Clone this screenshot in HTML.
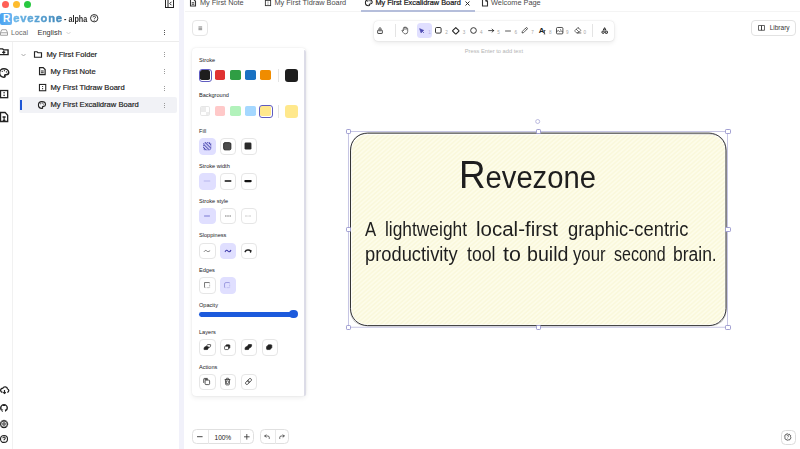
<!DOCTYPE html>
<html lang="en">
<head>
<meta charset="utf-8">
<title>Revezone</title>
<style>
html,body{margin:0;padding:0;}
body{width:800px;height:449px;overflow:hidden;background:#fff;position:relative;font-family:"Liberation Sans",sans-serif;color:#1b1b1f;}
.abs{position:absolute;}
svg{position:absolute;overflow:visible;}
.t{position:absolute;white-space:nowrap;line-height:1;}
/* sidebar */
#sidebar{position:absolute;left:0;top:0;width:181px;height:449px;background:#fff;}
#divider{position:absolute;left:179.3px;top:0;width:4.4px;height:449px;background:#f1f1fa;}
.dot{position:absolute;width:7px;height:7px;border-radius:50%;top:1px;}
.tree{font-size:7.6px;color:#1a1a1a;-webkit-text-stroke:0.18px #1a1a1a;}
.kebab{position:absolute;left:164px;width:1px;}
.kebab i{position:absolute;left:0;width:1px;height:1px;background:#555;}
.k2 i{background:#9a9a9a;}
/* tabs */
.tab{font-size:7.35px;color:#4a4a4a;top:-0.8px;}
/* panel */
#panel{position:absolute;left:192px;top:48px;width:113px;height:347px;background:#fff;border-radius:4px;box-shadow:0 0 1.5px rgba(0,0,0,.10),0 1.5px 5px rgba(0,0,0,.07);}
.lbl{position:absolute;left:7px;font-size:5.6px;color:#1b1b1f;white-space:nowrap;line-height:1;}
.sw{position:absolute;width:10.4px;height:10.4px;border-radius:1.8px;}
.btn{position:absolute;width:14.5px;height:14.7px;border:0.7px solid #e6e6e6;border-radius:4px;background:#fff;box-sizing:content-box;}
.btn.on{background:#e0dfff;border-color:#e0dfff;}
.island{position:absolute;background:#fff;border-radius:4px;box-shadow:0 0 1.5px rgba(0,0,0,.18),0 2px 5px rgba(0,0,0,.08);}
.num{position:absolute;font-size:4.6px;color:#a6a6a6;line-height:1;top:30.6px;}
.hand{font-family:"Liberation Sans",sans-serif;color:#1e1e1e;position:absolute;white-space:nowrap;line-height:1;transform-origin:0 0;}
#h1::first-letter{font-size:39px;}
.line{left:0;}
.line span{position:absolute;top:0;transform-origin:0 0;display:block;white-space:nowrap;}
.hd{position:absolute;width:3.4px;height:3.4px;border:0.7px solid #a19fd2;background:#fff;border-radius:1.2px;}
</style>
</head>
<body>

<!-- ============ SIDEBAR ============ -->
<div id="sidebar">
  <div class="dot" style="left:2px;background:#ff5f57;"></div>
  <div class="dot" style="left:13px;background:#febc2e;"></div>
  <div class="dot" style="left:24.200px;background:#28c840;"></div>

  <!-- logo -->
  <div class="abs" style="left:0;top:12.5px;width:12px;height:12px;border-radius:2px;background:linear-gradient(90deg,#4aa3f0,#69b4f2);"></div>
  <div class="t" style="left:3px;top:13.5px;font-size:10px;font-weight:bold;color:#fff;">R</div>
  <div class="t" id="logotxt" style="left:13.300px;top:13px;font-size:11.200px;font-weight:bold;letter-spacing:0.750px;background:linear-gradient(90deg,#6ab7ea,#3f86b8);-webkit-background-clip:text;background-clip:text;color:transparent;-webkit-text-fill-color:transparent;-webkit-text-stroke:0.45px transparent;">evezone</div>
  <div class="t" style="left:64.300px;top:14.600px;font-size:8.600px;font-weight:bold;color:#2a2a2a;transform:scaleX(.84);transform-origin:0 0;">- alpha</div>
  <svg style="left:89.900px;top:14.300px;" width="8.400" height="8.400" viewBox="0 0 16 16"><circle cx="8" cy="8" r="7" fill="none" stroke="#222" stroke-width="1.8"/><path d="M5.8 6.3a2.3 2.3 0 1 1 3.2 2.1c-.7.3-1 .7-1 1.4" fill="none" stroke="#222" stroke-width="1.6"/><circle cx="8" cy="12" r="1" fill="#222"/></svg>

  <!-- collapse icon -->
  <svg style="left:165px;top:-1px;" width="9" height="9" viewBox="0 0 18 18"><rect x="1" y="1" width="16" height="16" fill="none" stroke="#222" stroke-width="2"/><line x1="6" y1="1" x2="6" y2="17" stroke="#222" stroke-width="2"/><path d="M13 5.5l-3.5 3.5l3.5 3.5" fill="none" stroke="#222" stroke-width="2"/></svg>

  <!-- local / english row -->
  <svg style="left:0;top:29px;" width="8" height="7" viewBox="0 0 16 14"><path d="M1 7l2.5-5.5h9L15 7v5.5H1z" fill="none" stroke="#8a8a8a" stroke-width="1.6"/><line x1="1" y1="7.5" x2="15" y2="7.5" stroke="#8a8a8a" stroke-width="1.6"/></svg>
  <div class="t" style="left:11px;top:29.900px;font-size:7.100px;color:#6a6a6a;">Local</div>
  <div class="t" style="left:37.5px;top:28.5px;font-size:7.4px;color:#333;">English</div>
  <svg style="left:65.5px;top:30.5px;" width="5" height="4" viewBox="0 0 10 8"><path d="M1 2l4 4l4-4" fill="none" stroke="#c4c4c4" stroke-width="1.4"/></svg>
  <div class="kebab" style="top:30px;"><i style="top:0"></i><i style="top:2px"></i><i style="top:4px"></i></div>

  <div class="abs" style="left:0;top:41px;width:181px;height:1px;background:#ececec;"></div>
  <div class="abs" style="left:12px;top:42px;width:1px;height:407px;background:#f1f1f1;"></div>

  <!-- left icon column -->
  <svg style="left:0;top:48.200px;" width="8.600" height="7.600" viewBox="0 0 16 16" preserveAspectRatio="none"><path d="M0 2h5l2 2h8v10H0" fill="none" stroke="#222" stroke-width="2.56"/><path d="M4 9h6M7 6v6" stroke="#222" stroke-width="2.56"/></svg>
  <svg style="left:-1.200px;top:67.800px;" width="10.800" height="10" viewBox="0 0 20 18" preserveAspectRatio="none"><path d="M9 1.5c5 0 9 3 9 6.5c0 2.5-2 4-4.500 4h-1.500c-1.200 0-1.800 1.200-1.100 2.200c.8 1.200 0 2.300-1.900 2.300c-4.600 0-8-3.200-8-7.500S4.500 1.500 9 1.500z" fill="none" stroke="#222" stroke-width="2.82"/><circle cx="6" cy="6" r="1.2" fill="#222"/><circle cx="10" cy="4.800" r="1.200" fill="#222"/><circle cx="13.800" cy="7" r="1.200" fill="#222"/></svg>
  <svg style="left:0;top:90.400px;" width="8.200" height="8.200" viewBox="0 0 16 16"><rect x="1" y="1" width="14" height="14" fill="none" stroke="#222" stroke-width="2.56"/><circle cx="8" cy="5.500" r="1.500" fill="#222"/><circle cx="8" cy="10.500" r="1.500" fill="#222"/></svg>
  <svg style="left:0;top:112.400px;" width="8.200" height="10" viewBox="0 0 16 18" preserveAspectRatio="none"><path d="M1 1h9l5 5v11H1z" fill="none" stroke="#222" stroke-width="2.56"/><path d="M5 9h6M8 9v6M5.500 15h5" stroke="#222" stroke-width="2.3" fill="none"/></svg>

  <!-- tree -->
  <svg style="left:21px;top:52.5px;" width="5" height="4" viewBox="0 0 10 8"><path d="M1 2l4 4l4-4" fill="none" stroke="#9a9a9a" stroke-width="1.66"/></svg>
  <svg style="left:34px;top:50.600px;" width="8" height="7" viewBox="0 0 16 14"><path d="M1 1.500h5l2 2h7v9H1z" fill="none" stroke="#222" stroke-width="2.3"/></svg>
  <div class="t tree" style="left:46.5px;top:50.500px;">My First Folder</div>
  <div class="kebab k2" style="top:52px;"><i style="top:0"></i><i style="top:2px"></i><i style="top:4px"></i></div>

  <svg style="left:38.800px;top:67px;" width="6.700" height="8.200" viewBox="0 0 12 15" preserveAspectRatio="none"><path d="M1 1h6.500l3.500 3.500v9.500H1z" fill="none" stroke="#222" stroke-width="2.18"/><path d="M3.500 7.500h5M3.500 10.500h5" stroke="#222" stroke-width="1.92"/></svg>
  <div class="t tree" style="left:50.500px;top:67.500px;">My First Note</div>
  <div class="kebab k2" style="top:69px;"><i style="top:0"></i><i style="top:2px"></i><i style="top:4px"></i></div>

  <svg style="left:38.800px;top:84px;" width="7.200" height="7.200" viewBox="0 0 13 13"><rect x=".8" y=".8" width="11.400" height="11.400" fill="none" stroke="#222" stroke-width="1.92"/><circle cx="6.500" cy="4.500" r="1.100" fill="#222"/><circle cx="6.500" cy="8.500" r="1.100" fill="#222"/></svg>
  <div class="t tree" style="left:50.500px;top:84px;">My First Tldraw Board</div>
  <div class="kebab k2" style="top:85.500px;"><i style="top:0"></i><i style="top:2px"></i><i style="top:4px"></i></div>

  <div class="abs" style="left:19px;top:97px;width:158px;height:15.500px;background:#f1f2f6;border-radius:2px;"></div>
  <div class="abs" style="left:19.500px;top:100px;width:2px;height:9.500px;background:#1f57d6;"></div>
  <svg style="left:38px;top:101px;" width="8.400" height="8" viewBox="0 0 20 18" preserveAspectRatio="none"><path d="M9 1.500c5 0 9 3 9 6.500c0 2.500-2 4-4.500 4h-1.500c-1.200 0-1.800 1.200-1.100 2.200c.8 1.200 0 2.300-1.900 2.300c-4.600 0-8-3.200-8-7.500S4.500 1.500 9 1.500z" fill="none" stroke="#222" stroke-width="2.56"/><circle cx="6" cy="6" r="1.200" fill="#222"/><circle cx="10" cy="4.800" r="1.200" fill="#222"/><circle cx="13.800" cy="7" r="1.200" fill="#222"/></svg>
  <div class="t tree" style="left:50.500px;top:101px;">My First Excalidraw Board</div>
  <div class="kebab k2" style="top:102.500px;"><i style="top:0"></i><i style="top:2px"></i><i style="top:4px"></i></div>

  <!-- bottom icons -->
  <svg style="left:0;top:386px;" width="9" height="8" viewBox="0 0 18 16"><path d="M5 12.500a4 4 0 0 1 .5-8a5 5 0 0 1 9.500 1.500a3.300 3.300 0 0 1-.5 6.500" fill="none" stroke="#222" stroke-width="2.56"/><path d="M9 8v7M6.500 12.500l2.500 2.500l2.500-2.500" fill="none" stroke="#222" stroke-width="2.3"/></svg>
  <svg style="left:0;top:403.500px;" width="8" height="8" viewBox="0 0 16 16"><path fill="#222" d="M8 0C3.580 0 0 3.580 0 8c0 3.540 2.290 6.530 5.470 7.590.4.070.55-.17.550-.38 0-.19-.01-.82-.01-1.490-2.010.37-2.530-.49-2.690-.94-.09-.23-.48-.94-.82-1.130-.28-.15-.68-.52-.01-.53.630-.01 1.080.58 1.230.82.720 1.210 1.870.87 2.330.66.070-.52.280-.87.510-1.070-1.780-.2-3.640-.89-3.640-3.950 0-.87.310-1.590.82-2.150-.08-.2-.36-1.020.08-2.120 0 0 .67-.21 2.200.82.640-.18 1.320-.27 2-.27s1.360.09 2 .27c1.530-1.040 2.200-.82 2.200-.82.440 1.100.16 1.920.08 2.120.51.560.82 1.270.82 2.150 0 3.070-1.870 3.750-3.650 3.950.29.250.54.730.54 1.480 0 1.070-.01 1.930-.01 2.200 0 .21.150.46.550.38A8.010 8.010 0 0 0 16 8c0-4.420-3.580-8-8-8z"/></svg>
  <svg style="left:0;top:419.500px;" width="8" height="8" viewBox="0 0 16 16"><path d="M8 1l1.500 1.600l2.200-.4l.6 2.100l2.100.6l-.4 2.200L15.500 8.600l-1.500 1.600l.4 2.200l-2.100.6l-.6 2.100l-2.200-.4L8 16l-1.500-1.300l-2.200.4l-.6-2.100l-2.100-.6l.4-2.200L.5 8.600L2 7.100l-.4-2.200l2.100-.6l.6-2.100l2.200.4z" transform="translate(0,-.5)" fill="none" stroke="#222" stroke-width="2.18"/><circle cx="8" cy="8" r="2.400" fill="none" stroke="#222" stroke-width="2.05"/></svg>
  <svg style="left:0;top:434.500px;" width="8" height="8" viewBox="0 0 16 16"><circle cx="8" cy="8" r="7" fill="none" stroke="#222" stroke-width="2.3"/><path d="M5.800 6.300a2.300 2.300 0 1 1 3.200 2.100c-.7.300-1 .7-1 1.400" fill="none" stroke="#222" stroke-width="2.05"/><circle cx="8" cy="12" r="1" fill="#222"/></svg>
</div>
<div id="divider"></div>

<!-- ============ TABS ============ -->
<div id="tabs">
  <div class="abs" style="left:185px;top:10.500px;width:615px;height:1px;background:#f4f4f4;"></div>
  <svg style="left:190px;top:-1px;" width="6" height="7.500" viewBox="0 0 12 15"><path d="M1 1h6.500l3.500 3.500v9.500H1z" fill="none" stroke="#333" stroke-width="2.18"/><path d="M3.500 7.500h5M3.500 10.500h5" stroke="#333" stroke-width="1.92"/></svg>
  <div class="t tab" style="left:200px;">My First Note</div>
  <svg style="left:265px;top:0px;" width="6" height="6" viewBox="0 0 13 13"><rect x=".8" y=".8" width="11.400" height="11.400" fill="none" stroke="#333" stroke-width="1.92"/><circle cx="6.500" cy="4.500" r="1.100" fill="#333"/><circle cx="6.500" cy="8.500" r="1.100" fill="#333"/></svg>
  <div class="t tab" style="left:274.500px;">My First Tldraw Board</div>
  <svg style="left:365px;top:-1px;" width="8" height="7.500" viewBox="0 0 20 18"><path d="M9 1.500c5 0 9 3 9 6.500c0 2.500-2 4-4.500 4h-1.500c-1.200 0-1.800 1.200-1.100 2.200c.8 1.200 0 2.300-1.900 2.300c-4.600 0-8-3.200-8-7.500S4.500 1.500 9 1.500z" fill="none" stroke="#222" stroke-width="2.56"/><circle cx="6" cy="6" r="1.200" fill="#222"/><circle cx="10" cy="4.800" r="1.200" fill="#222"/><circle cx="13.800" cy="7" r="1.200" fill="#222"/></svg>
  <div class="t tab" style="left:375.500px;color:#111;-webkit-text-stroke:0.2px #111;">My First Excalidraw Board</div>
  <svg style="left:464.500px;top:.5px;" width="5" height="5" viewBox="0 0 10 10"><path d="M1 1l8 8M9 1l-8 8" stroke="#222" stroke-width="1.92"/></svg>
  <div class="abs" style="left:361px;top:9.500px;width:113.500px;height:2px;background:#b5bedb;"></div>
  <svg style="left:482px;top:-1px;" width="6" height="7.500" viewBox="0 0 12 15"><path d="M1 1h6.500l3.500 3.500v9.500H1z" fill="none" stroke="#333" stroke-width="2.18"/><path d="M7.500 1v3.500h3.500" stroke="#333" stroke-width="1.66" fill="none"/></svg>
  <div class="t tab" style="left:491px;">Welcome Page</div>
</div>

<!-- ============ CANVAS ============ -->
<div id="canvas">
  <svg style="left:0;top:0;" width="800" height="449" viewBox="0 0 800 449">
    <defs>
      <pattern id="hach" width="3.2" height="3.2" patternUnits="userSpaceOnUse" patternTransform="rotate(-41)">
        <rect width="3.2" height="3.2" fill="#fdfce9"/>
        <line x1="0" y1="1.6" x2="3.2" y2="1.6" stroke="#faf7d6" stroke-width="1.1"/>
      </pattern>
      <clipPath id="rc"><rect x="350.5" y="133.500" width="375.500" height="192" rx="17" ry="17"/></clipPath>
    </defs>
    <rect x="351.800" y="134.700" width="373" height="189.700" rx="15.500" ry="15.500" fill="url(#hach)"/>
    <rect x="350.500" y="133.100" width="375.500" height="192.500" rx="17" ry="17" fill="none" stroke="#333" stroke-width="0.950"/>
    <path d="M368 133.200 Q540 132.700 710 134 Q726.400 134.600 726.200 151 L726.500 308 Q726.200 326 709 325.700 L367 325.900 Q350.200 325.400 350.300 309 L350.700 150 Q350.900 133.500 368 133.200Z" fill="none" stroke="#1e1e1e" stroke-width="0.600" opacity=".4"/>
    <!-- selection -->
    <rect x="348.400" y="131.400" width="379.200" height="195.800" fill="none" stroke="#a19fd2" stroke-width="0.800" opacity=".75"/>
    <line x1="537.700" y1="124" x2="537.700" y2="131" stroke="#7d79d8" stroke-width="0" />
    <circle cx="537.700" cy="121.500" r="2" fill="#fff" stroke="#a19fd2" stroke-width="0.700"/>
  </svg>
  <div class="hd" style="left:345.8px;top:128.8px;"></div>
  <div class="hd" style="left:535.6px;top:128.8px;"></div>
  <div class="hd" style="left:725.2px;top:128.8px;"></div>
  <div class="hd" style="left:345.8px;top:226.9px;"></div>
  <div class="hd" style="left:725.2px;top:226.9px;"></div>
  <div class="hd" style="left:345.8px;top:324.9px;"></div>
  <div class="hd" style="left:535.6px;top:324.9px;"></div>
  <div class="hd" style="left:725.2px;top:324.9px;"></div>
  <div class="hand" id="h1" style="left:459.200px;top:154.500px;font-size:31px;transform:scaleX(.942);">Revezone</div>
  <div class="hand line" id="h2" style="top:219.500px;font-size:19.500px;"><span style="left:365.0px;transform:scaleX(0.857);">A</span> <span style="left:384.6px;transform:scaleX(0.890);">lightweight</span> <span style="left:476.4px;transform:scaleX(1.051);">local-first</span> <span style="left:567.5px;transform:scaleX(0.941);">graphic-centric</span></div>
  <div class="hand line" id="h3" style="top:245.300px;font-size:19.500px;"><span style="left:365.0px;transform:scaleX(0.939);">productivity</span> <span style="left:467.0px;transform:scaleX(0.903);">tool</span> <span style="left:503.4px;transform:scaleX(1.100);">to</span> <span style="left:527.0px;transform:scaleX(1.007);">build</span> <span style="left:573.1px;transform:scaleX(0.857);">your</span> <span style="left:613.6px;transform:scaleX(0.821);">second</span> <span style="left:673.3px;transform:scaleX(0.896);">brain.</span></div>
</div>

<!-- ============ EXCALIDRAW UI ============ -->
<div id="ui">
  <div class="abs" style="left:192.300px;top:20.100px;width:13.700px;height:13.700px;border:0.700px solid #e6e6e6;border-radius:4px;background:#fff;"></div>
  <svg style="left:197.600px;top:25.500px;" width="4.600" height="4.600" viewBox="0 0 10 10"><path d="M1 2h8M1 5h8M1 8h8" stroke="#444" stroke-width="1.300"/></svg>
  <div class="island" id="toolbar" style="left:373.500px;top:20.500px;width:240px;height:20px;"></div>
  <svg style="left:376.900px;top:27px;" width="6" height="7" viewBox="0 0 13 15"><rect x="1.500" y="6.800" width="10" height="7.200" rx="1" fill="none" stroke="#222" stroke-width="1.800"/><path d="M4.500 6.800V3.400a2 2 0 0 1 4 0V6.800" fill="none" stroke="#222" stroke-width="1.600"/><circle cx="6.500" cy="10.300" r="1" fill="#222"/></svg>
  <div class="abs" style="left:395.200px;top:24px;width:0.700px;height:12.500px;background:#e4e4e4;"></div>
  <svg style="left:400.600px;top:26.200px;" width="8" height="8.500" viewBox="0 0 16 17"><path d="M4.800 10V4.200Q4.800 3 5.900 3Q7 3 7 4.200V2.800Q7 1.600 8.100 1.600Q9.200 1.600 9.200 2.800V3.600Q9.200 2.600 10.300 2.600Q11.400 2.600 11.400 3.800V5.400Q11.400 4.400 12.400 4.400Q13.400 4.400 13.400 5.600V11Q13.400 15.800 8.800 15.800Q6 15.800 4.600 13.400L2 9.600Q1.400 8.400 2.600 8.200Q3.600 8.200 4.800 10Z" fill="none" stroke="#333" stroke-width="1.400" stroke-linejoin="round"/><path d="M7 4.200V8M9.200 3.600V8M11.400 5.400V8.400" stroke="#555" stroke-width=".9" fill="none"/></svg>
  <div class="abs" style="left:417.100px;top:23.400px;width:15px;height:14.300px;border-radius:3.500px;background:#e0dfff;"></div>
  <svg style="left:419.400px;top:28px;" width="5.600" height="5.600" viewBox="0 0 13 13"><path d="M1.500 1.500l3.600 10l1.700-4.200l4.200-1.700z" fill="#4a47b1" stroke="#4a47b1" stroke-width="1.600" stroke-linejoin="round"/><path d="M7 7l4 4" stroke="#4a47b1" stroke-width="1.800" stroke-linecap="round"/></svg>
  <div class="num" style="left:428.3px;color:#b3b0ea;">1</div>
  <div class="num" style="left:445.2px;">2</div>
  <div class="num" style="left:462.7px;">3</div>
  <div class="num" style="left:480px;">4</div>
  <div class="num" style="left:497.2px;">5</div>
  <div class="num" style="left:514.5px;">6</div>
  <div class="num" style="left:531.2px;">7</div>
  <div class="num" style="left:548.9px;">8</div>
  <div class="num" style="left:566px;">9</div>
  <div class="num" style="left:583.5px;">0</div>
  <svg style="left:435.300px;top:27.200px;" width="6.600" height="6.600" viewBox="0 0 13 13"><rect x="1" y="1" width="11" height="11" rx="2.200" fill="none" stroke="#222" stroke-width="1.800"/></svg>
  <svg style="left:452.300px;top:26.600px;" width="7.600" height="7.600" viewBox="0 0 15 15"><path d="M7.500 1.200l5.800 5.300q1 1 0 2l-5.100 5q-.7.600-1.400 0l-5.100-5q-1-1 0-2z" fill="none" stroke="#222" stroke-width="2.200" stroke-linejoin="round"/></svg>
  <svg style="left:469.700px;top:26.900px;" width="7" height="7" viewBox="0 0 14 14"><circle cx="7" cy="7" r="5.700" fill="none" stroke="#222" stroke-width="1.800"/></svg>
  <svg style="left:487.700px;top:27.800px;" width="6.400" height="5.200" viewBox="0 0 15 12"><path d="M1.500 6h12M9.500 2.500l4 3.500l-4 3.500" fill="none" stroke="#111" stroke-width="1.700" stroke-linecap="round" stroke-linejoin="round"/></svg>
  <svg style="left:504.800px;top:29.500px;" width="6" height="2" viewBox="0 0 12 4"><path d="M1 2h10" stroke="#222" stroke-width="1.500" stroke-linecap="round"/></svg>
  <svg style="left:521.200px;top:27px;" width="7" height="7" viewBox="0 0 14 14"><path d="M2 12l.8-3.300l7-7a1.600 1.600 0 0 1 2.500 2.500l-7 7zM8.800 2.700l2.500 2.500" fill="none" stroke="#222" stroke-width="1.400" stroke-linejoin="round"/></svg>
  <div class="t" style="left:538.800px;top:26.800px;font-size:7.800px;font-weight:bold;color:#222;">A</div>
  <svg style="left:543px;top:30px;" width="3" height="4.500" viewBox="0 0 6 9"><path d="M1 1h4M3 1v7M1.500 8h3" stroke="#222" stroke-width="1.300" fill="none"/></svg>
  <svg style="left:555.800px;top:26.800px;" width="7.400" height="7.400" viewBox="0 0 15 15"><rect x="1" y="1" width="13" height="13" rx="2" fill="none" stroke="#222" stroke-width="1.600"/><path d="M1 10l3.500-3l3 2.500l2.500-2l4 3" fill="none" stroke="#222" stroke-width="1.400"/><circle cx="9.500" cy="5" r=".9" fill="#222"/></svg>
  <svg style="left:573.600px;top:27.200px;" width="7.400" height="6.900" viewBox="0 0 16 15"><path d="M9.500 1.800l4.700 4.700q.8.800 0 1.600L9.500 12.800H5.500L2 9.300q-.8-.8 0-1.600l5.900-5.900q.8-.8 1.600 0zM5 5l5.500 5.500M7 13h8" fill="none" stroke="#222" stroke-width="1.400" stroke-linejoin="round" stroke-linecap="round"/></svg>
  <div class="abs" style="left:592.400px;top:24px;width:0.700px;height:12.500px;background:#e4e4e4;"></div>
  <svg style="left:600.600px;top:26.900px;" width="7.200" height="7.200" viewBox="0 0 16 16"><path d="M8 1.500l2.800 5H5.200z" fill="none" stroke="#111" stroke-width="2" stroke-linejoin="round"/><circle cx="4.700" cy="11.500" r="2.700" fill="none" stroke="#111" stroke-width="2"/><rect x="9.500" y="9.200" width="4.800" height="4.800" rx=".8" fill="none" stroke="#111" stroke-width="2"/></svg>
  <div class="t" id="hint" style="left:464.800px;top:48.700px;font-size:5.720px;color:#b4b4b4;">Press Enter to add text</div>
  <div class="abs" style="left:751.300px;top:20.300px;width:44.300px;height:15.300px;border:0.700px solid #e2e2e2;border-radius:4px;background:#fff;box-sizing:border-box;"></div>
  <svg style="left:757.700px;top:25px;" width="7" height="5.800" viewBox="0 0 14 11.600"><path d="M1 1h6v9.600H1zM7 1h6v9.600H7z" fill="none" stroke="#333" stroke-width="1.500"/></svg>
  <div class="t" style="left:769.700px;top:25.300px;font-size:6.500px;color:#333;">Library</div>
  <div id="panel" style="left:192.400px;top:47.600px;width:113.200px;height:348.300px;"></div>
  <div class="abs" style="left:304.200px;top:49.500px;width:1.700px;height:346px;background:#dcdce7;border-radius:0 2px 2px 0;"></div>
  <div class="lbl" style="left:199px;top:57.5px;">Stroke</div>
  <div class="lbl" style="left:199px;top:93.3px;">Background</div>
  <div class="lbl" style="left:199px;top:129.1px;">Fill</div>
  <div class="lbl" style="left:199px;top:163.6px;">Stroke width</div>
  <div class="lbl" style="left:199px;top:198.6px;">Stroke style</div>
  <div class="lbl" style="left:199px;top:233.3px;">Sloppiness</div>
  <div class="lbl" style="left:199px;top:268px;">Edges</div>
  <div class="lbl" style="left:199px;top:302.7px;">Opacity</div>
  <div class="lbl" style="left:199px;top:329.7px;">Layers</div>
  <div class="lbl" style="left:199px;top:364.5px;">Actions</div>
  <div class="sw" style="left:200.1px;top:69.800px;background:#1e1e1e;"></div>
  <div class="sw" style="left:215.1px;top:69.800px;background:#e03131;"></div>
  <div class="sw" style="left:230.2px;top:69.800px;background:#2f9e44;"></div>
  <div class="sw" style="left:245.4px;top:69.800px;background:#1971c2;"></div>
  <div class="sw" style="left:260.4px;top:69.800px;background:#f08c00;"></div>
  <div class="abs" style="left:199px;top:68.700px;width:11.300px;height:11.300px;border:0.600px solid #5f5cc0;border-radius:3px;"></div>
  <div class="abs" style="left:278.300px;top:69px;width:0.700px;height:12.500px;background:#e4e4e4;"></div>
  <div class="abs" style="left:285.100px;top:68.600px;width:13px;height:13px;border-radius:3px;background:#1e1e1e;"></div>
  <div class="sw" style="left:200.1px;top:106px;background:#fff;border:0.500px solid #e6e6e6;box-sizing:border-box;overflow:hidden;"><div class="abs" style="left:0;top:0;width:5.250px;height:5.250px;background:#ececec;"></div><div class="abs" style="left:5.250px;top:5.250px;width:5.250px;height:5.250px;background:#ececec;"></div></div>
  <div class="sw" style="left:215.1px;top:106px;background:#ffc9c9;"></div>
  <div class="sw" style="left:230.2px;top:106px;background:#b2f2bb;"></div>
  <div class="sw" style="left:245.4px;top:106px;background:#a5d8ff;"></div>
  <div class="sw" style="left:260.4px;top:106px;background:#ffe88c;"></div>
  <div class="abs" style="left:259.300px;top:104.900px;width:11.300px;height:11.300px;border:0.600px solid #5f5cc0;border-radius:3px;"></div>
  <div class="abs" style="left:278.300px;top:105px;width:0.700px;height:12.500px;background:#e4e4e4;"></div>
  <div class="abs" style="left:285.100px;top:104.600px;width:13px;height:13px;border-radius:3px;background:#ffe88c;"></div>
  <div class="btn on" style="left:199px;top:138.3px;"></div>
  <div class="btn" style="left:219.6px;top:138.3px;"></div>
  <div class="btn" style="left:240.5px;top:138.3px;"></div>
  <svg style="left:201.7px;top:141.1px;" width="10.5" height="10.5" viewBox="0 0 16 16"><defs><pattern id="ph" width="3.600" height="3.600" patternUnits="userSpaceOnUse" patternTransform="rotate(45)"><line x1="0" y1="1.800" x2="3.600" y2="1.800" stroke="#4a47b1" stroke-width="1.500"/></pattern></defs><rect x="2.500" y="2.500" width="11" height="11" rx="2" fill="url(#ph)" stroke="#4a47b1" stroke-width="1.300" stroke-dasharray="1.800 1.200"/></svg>
  <svg style="left:222.3px;top:141.1px;" width="10.5" height="10.5" viewBox="0 0 16 16"><defs><pattern id="pc" width="3" height="3" patternUnits="userSpaceOnUse" patternTransform="rotate(45)"><path d="M0 1.500h3M1.500 0v3" stroke="#111" stroke-width="1.500"/></pattern></defs><rect x="2.500" y="2.500" width="11" height="11" rx="2" fill="url(#pc)" stroke="#222" stroke-width="1.400"/></svg>
  <svg style="left:243.45px;top:141.35px;" width="10" height="10" viewBox="0 0 16 16"><rect x="2.500" y="2.500" width="11" height="11" rx="2" fill="#2a2a2a"/></svg>
  <div class="btn on" style="left:199px;top:173px;"></div>
  <div class="btn" style="left:219.6px;top:173px;"></div>
  <div class="btn" style="left:240.5px;top:173px;"></div>
  <svg style="left:201.95px;top:176.05px;" width="10" height="10" viewBox="0 0 16 16"><path d="M3.500 8h9" stroke="#8e8bd9" stroke-width=".8" stroke-linecap="round"/></svg>
  <svg style="left:222.55px;top:176.05px;" width="10" height="10" viewBox="0 0 16 16"><path d="M3.500 8h9" stroke="#111" stroke-width="2.200" stroke-linecap="round"/></svg>
  <svg style="left:243.45px;top:176.05px;" width="10" height="10" viewBox="0 0 16 16"><path d="M3.800 8h8.400" stroke="#111" stroke-width="3.600" stroke-linecap="round"/></svg>
  <div class="btn on" style="left:199px;top:207.8px;"></div>
  <div class="btn" style="left:219.6px;top:207.8px;"></div>
  <div class="btn" style="left:240.5px;top:207.8px;"></div>
  <svg style="left:201.95px;top:210.85px;" width="10" height="10" viewBox="0 0 16 16"><path d="M4 8h8" stroke="#5a57c4" stroke-width="1.200" stroke-linecap="round"/></svg>
  <svg style="left:222.55px;top:210.85px;" width="10" height="10" viewBox="0 0 16 16"><path d="M3.500 8h2M7 8h2M10.500 8h2" stroke="#333" stroke-width="1.300"/></svg>
  <svg style="left:243.45px;top:210.85px;" width="10" height="10" viewBox="0 0 16 16"><path d="M3.500 8h1M5.500 8h1M7.500 8h1M9.500 8h1M11.500 8h1" stroke="#777" stroke-width="1"/></svg>
  <div class="btn" style="left:199px;top:242.6px;"></div>
  <div class="btn on" style="left:219.6px;top:242.6px;"></div>
  <div class="btn" style="left:240.5px;top:242.6px;"></div>
  <svg style="left:201.95px;top:245.65px;" width="10" height="10" viewBox="0 0 16 16"><path d="M3.500 8.800c1.500-2.200 3-2.200 4.200-.8s2.800 1.200 4.800-.2" fill="none" stroke="#333" stroke-width="1" stroke-linecap="round"/></svg>
  <svg style="left:222.55px;top:245.65px;" width="10" height="10" viewBox="0 0 16 16"><path d="M3.500 9c1.300-2.800 3-3 4.300-1s3.200 1.600 4.700-1" fill="none" stroke="#3f3cab" stroke-width="1.700" stroke-linecap="round"/></svg>
  <svg style="left:243.45px;top:245.65px;" width="10" height="10" viewBox="0 0 16 16"><path d="M3.500 9c1.500-3 6.500-3.300 9-1M12 9.500l.6-2" fill="none" stroke="#222" stroke-width="2.400" stroke-linecap="round"/></svg>
  <div class="btn" style="left:199px;top:277.2px;"></div>
  <div class="btn on" style="left:219.6px;top:277.2px;"></div>
  <svg style="left:202.85px;top:281.15px;" width="8.2" height="8.2" viewBox="0 0 16 16"><path d="M3 13V3h10" fill="none" stroke="#333" stroke-width="1.300"/><path d="M13 5v8H5" fill="none" stroke="#555" stroke-width="1.100" stroke-dasharray="1.500 1.500"/></svg>
  <svg style="left:223.45px;top:281.15px;" width="8.2" height="8.2" viewBox="0 0 16 16"><path d="M3 13V6q0-3 3-3h7" fill="none" stroke="#7d7ad1" stroke-width="1.300"/><path d="M13 5v8H5" fill="none" stroke="#8e8bd9" stroke-width="1.100" stroke-dasharray="1.500 1.500"/></svg>
  <div class="abs" style="left:199px;top:311.900px;width:97.900px;height:4.700px;border-radius:2.400px;background:#1c5adc;"></div>
  <div class="abs" style="left:289.400px;top:310.100px;width:8.300px;height:8.300px;border-radius:50%;background:#1c5adc;"></div>
  <div class="btn" style="left:199px;top:338.9px;"></div>
  <div class="btn" style="left:219.6px;top:338.9px;"></div>
  <div class="btn" style="left:240.5px;top:338.9px;"></div>
  <div class="btn" style="left:261.5px;top:338.9px;"></div>
  <svg style="left:202.75px;top:342.75px;" width="8.4" height="8.4" viewBox="0 0 16 16"><rect x="6.500" y="3" width="7" height="5.500" rx="1.200" fill="none" stroke="#222" stroke-width="1.300" transform="skewX(-18) translate(2.500 0)"/><rect x="2" y="7" width="7.500" height="5.500" rx="1.200" fill="#222" stroke="#222" stroke-width="1.300" transform="skewX(-18) translate(3.500 0)"/></svg>
  <svg style="left:223.35px;top:342.75px;" width="8.4" height="8.4" viewBox="0 0 16 16"><rect x="5.500" y="3.500" width="7.500" height="6.500" rx="1.300" fill="#222" stroke="#222" stroke-width="1.300"/><rect x="3" y="6" width="7.500" height="6.500" rx="1.300" fill="#fff" stroke="#222" stroke-width="1.300"/></svg>
  <svg style="left:244.25px;top:342.75px;" width="8.4" height="8.4" viewBox="0 0 16 16"><rect x="6.500" y="3" width="7" height="5.500" rx="1.200" fill="#222" stroke="#222" stroke-width="1.300" transform="skewX(-18) translate(2.500 0)"/><rect x="2" y="7" width="7.500" height="5.500" rx="1.200" fill="#222" stroke="#222" stroke-width="1.300" transform="skewX(-18) translate(3.500 0)"/></svg>
  <svg style="left:265.25px;top:342.75px;" width="8.4" height="8.4" viewBox="0 0 16 16"><rect x="5.500" y="3.500" width="7.500" height="6.500" rx="1.300" fill="#222" stroke="#222" stroke-width="1.300"/><rect x="3" y="6" width="7.500" height="6.500" rx="1.300" fill="#222" stroke="#222" stroke-width="1.300"/></svg>
  <div class="btn" style="left:199px;top:373.5px;"></div>
  <div class="btn" style="left:219.6px;top:373.5px;"></div>
  <div class="btn" style="left:240.5px;top:373.5px;"></div>
  <svg style="left:202.45px;top:377.05px;" width="9" height="9" viewBox="0 0 16 16"><rect x="5.500" y="5.500" width="8" height="8" rx="1.500" fill="none" stroke="#222" stroke-width="1.300"/><path d="M3 10.500V4q0-1.500 1.500-1.500H10" fill="none" stroke="#222" stroke-width="1.300"/><path d="M4.500 4h6" stroke="#222" stroke-width="1.600"/></svg>
  <svg style="left:223.05px;top:377.05px;" width="9" height="9" viewBox="0 0 16 16"><path d="M3 4.500h10M6 4.500V3q0-.8.800-.8h2.400q.8 0 .8.800V4.500M4.200 4.500l.6 8.500q.1 1 1 1h4.400q.9 0 1-1l.6-8.500" fill="none" stroke="#222" stroke-width="1.300"/><rect x="6.300" y="7" width="3.400" height="4.500" fill="none" stroke="#222" stroke-width="1"/></svg>
  <svg style="left:243.95px;top:377.05px;" width="9" height="9" viewBox="0 0 16 16"><g transform="rotate(-45 8 8)"><rect x="1.500" y="5.500" width="7.500" height="5" rx="2.500" fill="none" stroke="#222" stroke-width="1.200"/><rect x="7" y="5.500" width="7.500" height="5" rx="2.500" fill="none" stroke="#222" stroke-width="1.200"/></g></svg>
  <div class="abs" style="left:192.200px;top:429.400px;width:61.500px;height:14.700px;border:0.700px solid #e0e0e0;border-radius:4.500px;background:#fff;box-sizing:border-box;"></div>
  <div class="abs" style="left:207.600px;top:430px;width:0.600px;height:13.500px;background:#e8e8e8;"></div>
  <div class="abs" style="left:239.500px;top:430px;width:0.600px;height:13.500px;background:#e8e8e8;"></div>
  <svg style="left:197.400px;top:436.200px;" width="5.600" height="1.400" viewBox="0 0 11.200 2.800"><path d="M0 1.400h11.200" stroke="#333" stroke-width="1.800"/></svg>
  <div class="t" style="left:214.600px;top:435px;font-size:6.600px;color:#222;letter-spacing:-0.100px;">100%</div>
  <svg style="left:244px;top:434.100px;" width="5.600" height="5.600" viewBox="0 0 10 10"><path d="M0 5h10M5 0v10" stroke="#333" stroke-width="1.500"/></svg>
  <div class="abs" style="left:259.500px;top:429.400px;width:29.700px;height:14.700px;border:0.700px solid #e0e0e0;border-radius:4.500px;background:#fff;box-sizing:border-box;"></div>
  <div class="abs" style="left:274.800px;top:430px;width:0.600px;height:13.500px;background:#e8e8e8;"></div>
  <svg style="left:264.200px;top:434px;" width="6" height="5.500" viewBox="0 0 12 11"><path d="M4 1.500L1.500 4L4 6.500M1.500 4h6q3 0 3 2.800v2.200" fill="none" stroke="#333" stroke-width="1.500" stroke-linecap="round" stroke-linejoin="round"/></svg>
  <svg style="left:278.800px;top:434px;" width="6" height="5.500" viewBox="0 0 12 11"><path d="M8 1.500L10.500 4L8 6.500M10.500 4h-6q-3 0-3 2.800v2.200" fill="none" stroke="#333" stroke-width="1.500" stroke-linecap="round" stroke-linejoin="round"/></svg>
  <div class="abs" style="left:780.500px;top:429.500px;width:15px;height:15px;border:0.700px solid #dcdcdc;border-radius:4.500px;background:#fff;box-sizing:border-box;"></div>
  <svg style="left:784.300px;top:433.300px;" width="7.500" height="7.500" viewBox="0 0 15 15"><path d="M7.500 1.500l1.400 1.300l1.900-.3l.8 1.700l1.700.8l-.3 1.900l1.300 1.400l-1.300 1.400l.3 1.900l-1.700.8l-.8 1.700l-1.900-.3L7.500 14.700l-1.400-1.300l-1.900.3l-.8-1.700l-1.700-.8l.3-1.900L.7 7.900L2 6.500l-.3-1.900l1.700-.8l.8-1.700l1.900.3z" fill="none" stroke="#333" stroke-width="1.600" stroke-linejoin="round"/><path d="M6 6.300a1.600 1.600 0 1 1 2.300 1.400c-.5.300-.8.600-.8 1.100" fill="none" stroke="#333" stroke-width="1.300"/><circle cx="7.500" cy="10.600" r=".7" fill="#333"/></svg>
</div>

</body>
</html>
